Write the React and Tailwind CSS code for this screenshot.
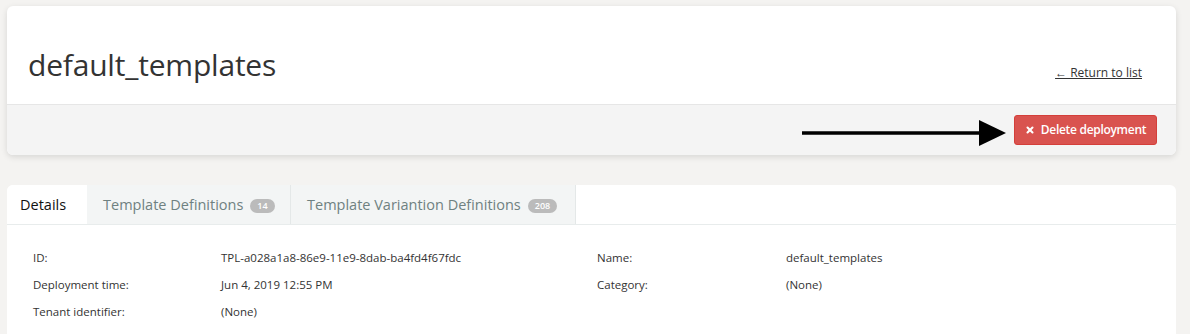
import { X } from "lucide-react";

const font = { fontFamily: '"Open Sans", "Noto Sans", sans-serif' };

export default function App() {
  const rows = [
    ["ID:", "TPL-a028a1a8-86e9-11e9-8dab-ba4fd4f67fdc", "Name:", "default_templates"],
    ["Deployment time:", "Jun 4, 2019 12:55 PM", "Category:", "(None)"],
    ["Tenant identifier:", "(None)", "", ""],
  ];

  return (
    <div className="min-h-[334px] bg-[#f4f3f1] pt-[6px] pl-[7px] pr-[14px] text-[#333]" style={font}>
      {/* Header card */}
      <div className="rounded-md bg-white shadow-[0_2px_6px_rgba(0,0,0,0.12)] overflow-hidden">
        <div className="h-[98px] flex items-center justify-between pl-[21px] pr-[34px]">
          <h1 className="text-[30px] tracking-[-0.2px] text-[#333] leading-none mt-[20px]">default_templates</h1>
          <a href="#" className="text-[12px] underline mt-[36px] text-[#333]">← Return to list</a>
        </div>
        <div className="h-[51px] border-t border-[#e6e6e6] bg-[#f4f4f4] flex items-center justify-end pr-[19px]">
          <svg width="204" height="26" viewBox="0 0 204 26" className="mr-[8px] mt-[6px]">
            <line x1="0" y1="13" x2="180" y2="13" stroke="#000" strokeWidth="3.5" />
            <polygon points="177,0 204,13 177,26" fill="#000" />
          </svg>
          <button className="h-[30px] w-[143px] justify-center flex items-center gap-[6px] rounded-[3px] bg-[#d9534f] border border-[#d43f3a] text-white text-[12px] font-semibold tracking-[-0.3px] mt-[-1px] whitespace-nowrap">
            <X size={10} strokeWidth={5} />
            Delete deployment
          </button>
        </div>
      </div>

      {/* Details card */}
      <div className="mt-[30px] rounded-t-md bg-white h-[160px]">
        <div className="flex h-[40px] border-b border-[#e8ecec] whitespace-nowrap">
          <div className="shrink-0 px-[13px] flex items-center text-[14.5px] text-[#111] bg-white rounded-tl-md w-[80px]">Details</div>
          <div className="shrink-0 px-[16px] flex items-center gap-[7px] text-[14.5px] text-[#6f8181] bg-[#f3f5f5] border-r border-[#e4e8e8] w-[204px]">
            Template Definitions
            <span className="rounded-full bg-[#bbbbbb] text-white text-[9px] font-semibold px-[7px] h-[14px] flex items-center leading-none mt-[2px]">14</span>
          </div>
          <div className="shrink-0 px-[16px] flex items-center gap-[7px] text-[14.5px] text-[#6f8181] bg-[#f3f5f5] border-r border-[#e4e8e8] w-[285px]">
            Template Variantion Definitions
            <span className="rounded-full bg-[#bbbbbb] text-white text-[9px] font-semibold px-[7px] h-[14px] flex items-center leading-none mt-[2px]">208</span>
          </div>
        </div>
        <div className="pt-[19px] pl-[26px] text-[11.5px] text-[#333]">
          {rows.map((r, i) => (
            <div key={i} className="flex h-[27px] items-center">
              <div className="w-[188px]">{r[0]}</div>
              <div className="w-[376px]">{r[1]}</div>
              <div className="w-[189px]">{r[2]}</div>
              <div>{r[3]}</div>
            </div>
          ))}
        </div>
      </div>
    </div>
  );
}
